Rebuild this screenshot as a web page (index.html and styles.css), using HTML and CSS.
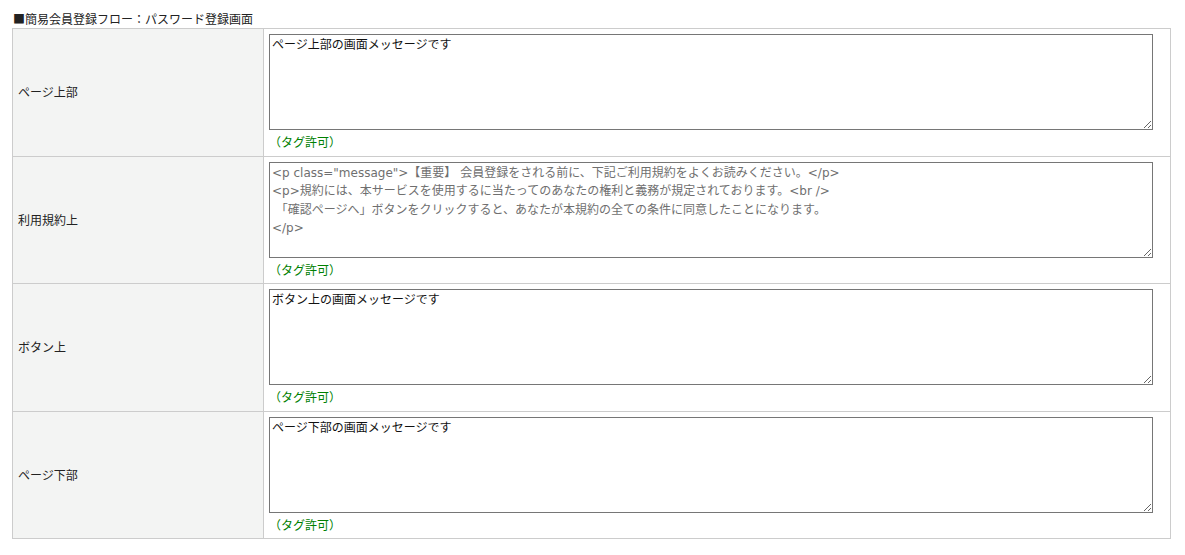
FILE: index.html
```html
<!DOCTYPE html>
<html lang="ja">
<head>
<meta charset="utf-8">
<title>パスワード登録画面</title>
<link rel="stylesheet" href="styles.css">
</head>
<body>
<div class="page">
  <div class="title">■簡易会員登録フロー：パスワード登録画面</div>
  <table class="form">
    <tr>
      <th class="label">ページ上部</th>
      <td class="field">
        <textarea class="msg">ページ上部の画面メッセージです</textarea>
        <div class="note">（タグ許可）</div>
      </td>
    </tr>
    <tr>
      <th class="label">利用規約上</th>
      <td class="field">
        <textarea class="msg muted">&lt;p class="message"&gt;【重要】 会員登録をされる前に、下記ご利用規約をよくお読みください。&lt;/p&gt;
&lt;p&gt;規約には、本サービスを使用するに当たってのあなたの権利と義務が規定されております。&lt;br /&gt;
 「確認ページへ」ボタンをクリックすると、あなたが本規約の全ての条件に同意したことになります。
&lt;/p&gt;</textarea>
        <div class="note">（タグ許可）</div>
      </td>
    </tr>
    <tr>
      <th class="label">ボタン上</th>
      <td class="field">
        <textarea class="msg">ボタン上の画面メッセージです</textarea>
        <div class="note">（タグ許可）</div>
      </td>
    </tr>
    <tr>
      <th class="label">ページ下部</th>
      <td class="field">
        <textarea class="msg">ページ下部の画面メッセージです</textarea>
        <div class="note">（タグ許可）</div>
      </td>
    </tr>
  </table>
</div>
</body>
</html>
```

FILE: styles.css
```css
html, body {
  margin: 0;
  padding: 0;
  background: #ffffff;
}
body {
  font-family: "Noto Sans CJK JP", "Noto Sans", sans-serif;
  font-size: 12px;
  line-height: 18px;
  color: #222;
}
.page {
  padding: 10px 0 0 12px;
}
.title {
  line-height: 18px;
  padding-left: 1px;
  color: #222;
}
.form {
  width: 1159px;
  border-collapse: collapse;
  border: 1px solid #cccccc;
}
.form th,
.form td {
  border: 1px solid #cccccc;
  padding: 5px;
  vertical-align: middle;
}
.label {
  width: 240px;
  background: #f3f4f3;
  font-weight: normal;
  text-align: left;
  color: #222;
}
.field {
  background: #fff;
}
.msg {
  display: block;
  box-sizing: border-box;
  width: 884px;
  height: 96px;
  margin: 0;
  padding: 1px 2px;
  border: 1px solid #767676;
  border-radius: 0;
  font-family: "DejaVu Sans", "Noto Sans CJK JP", sans-serif;
  font-size: 12px;
  line-height: 18.6px;
  color: #111;
  background: #fff;
  resize: both;
}
.msg.muted {
  color: #6f6f6f;
}
.note {
  margin-top: 4px;
  line-height: 16.5px;
  color: #008000;
}
```
